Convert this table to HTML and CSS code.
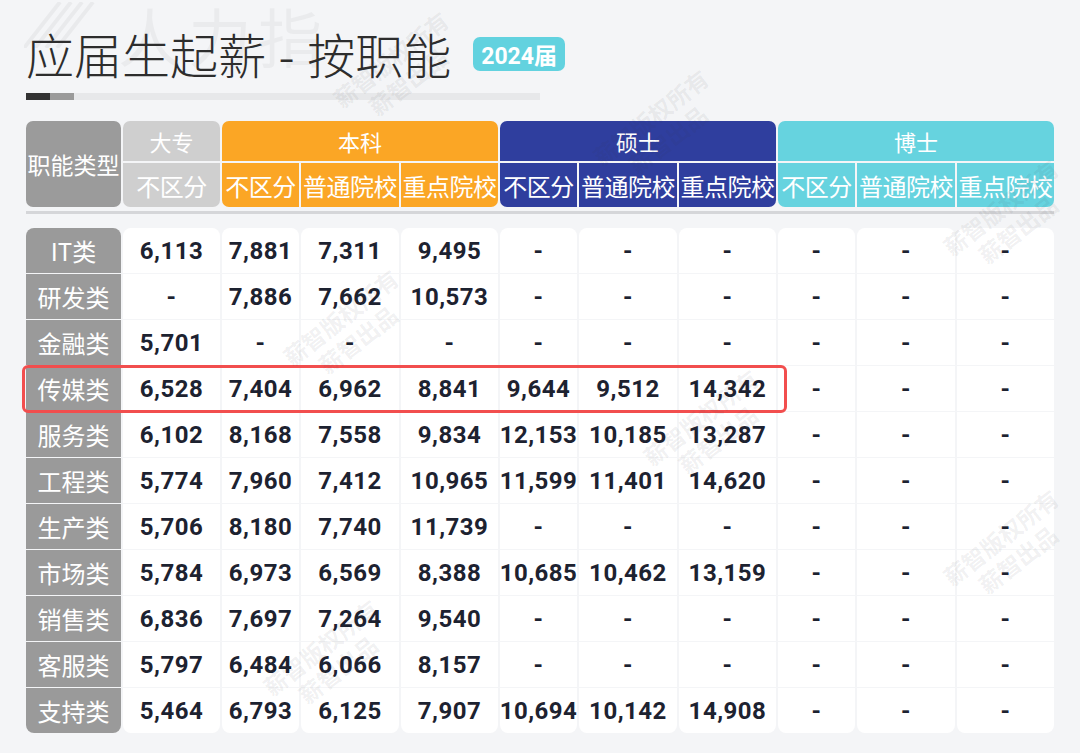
FILE: index.html
```html
<!DOCTYPE html>
<html lang="zh-CN">
<head>
<meta charset="utf-8">
<title>应届生起薪 - 按职能</title>
<link rel="stylesheet" href="styles.css">
</head>
<body>
<div class="page">
  <div class="bg-mark" aria-hidden="true">
    <svg class="bg-stripes" width="80" height="46" viewBox="0 0 80 46">
      <g stroke="#000" stroke-opacity="0.045" stroke-width="4">
        <line x1="0" y1="46" x2="36" y2="0"/>
        <line x1="11" y1="46" x2="47" y2="0"/>
        <line x1="22" y1="46" x2="58" y2="0"/>
        <line x1="33" y1="46" x2="69" y2="0"/>
      </g>
    </svg>
    <span class="bg-text">人力指</span>
  </div>

  <div class="title-row">
    <h1 class="title">应届生起薪 - 按职能</h1>
    <span class="badge">2024届</span>
  </div>
  <div class="bar"><span class="bar-dark"></span><span class="bar-mid"></span></div>

  <div class="table">
    <div class="thead">
      <div class="h-label">职能类型</div>
      <div class="h-title zk">大专</div>
      <div class="h-title bk span3">本科</div>
      <div class="h-title ss span3">硕士</div>
      <div class="h-title bs span3">博士</div>
      <div class="h-sub zk first last">不区分</div>
      <div class="h-sub bk first">不区分</div>
      <div class="h-sub bk">普通院校</div>
      <div class="h-sub bk last">重点院校</div>
      <div class="h-sub ss first">不区分</div>
      <div class="h-sub ss">普通院校</div>
      <div class="h-sub ss last">重点院校</div>
      <div class="h-sub bs first">不区分</div>
      <div class="h-sub bs">普通院校</div>
      <div class="h-sub bs last">重点院校</div>
    </div>
    <div class="rule"></div>
    <div class="tbody">
      <div class="c lbl top">IT类</div><div class="c top">6,113</div><div class="c top">7,881</div><div class="c top">7,311</div><div class="c top">9,495</div><div class="c top">-</div><div class="c top">-</div><div class="c top">-</div><div class="c top">-</div><div class="c top">-</div><div class="c top">-</div>
      <div class="c lbl">研发类</div><div class="c">-</div><div class="c">7,886</div><div class="c">7,662</div><div class="c">10,573</div><div class="c">-</div><div class="c">-</div><div class="c">-</div><div class="c">-</div><div class="c">-</div><div class="c">-</div>
      <div class="c lbl">金融类</div><div class="c">5,701</div><div class="c">-</div><div class="c">-</div><div class="c">-</div><div class="c">-</div><div class="c">-</div><div class="c">-</div><div class="c">-</div><div class="c">-</div><div class="c">-</div>
      <div class="c lbl">传媒类</div><div class="c">6,528</div><div class="c">7,404</div><div class="c">6,962</div><div class="c">8,841</div><div class="c">9,644</div><div class="c">9,512</div><div class="c">14,342</div><div class="c">-</div><div class="c">-</div><div class="c">-</div>
      <div class="c lbl">服务类</div><div class="c">6,102</div><div class="c">8,168</div><div class="c">7,558</div><div class="c">9,834</div><div class="c">12,153</div><div class="c">10,185</div><div class="c">13,287</div><div class="c">-</div><div class="c">-</div><div class="c">-</div>
      <div class="c lbl">工程类</div><div class="c">5,774</div><div class="c">7,960</div><div class="c">7,412</div><div class="c">10,965</div><div class="c">11,599</div><div class="c">11,401</div><div class="c">14,620</div><div class="c">-</div><div class="c">-</div><div class="c">-</div>
      <div class="c lbl">生产类</div><div class="c">5,706</div><div class="c">8,180</div><div class="c">7,740</div><div class="c">11,739</div><div class="c">-</div><div class="c">-</div><div class="c">-</div><div class="c">-</div><div class="c">-</div><div class="c">-</div>
      <div class="c lbl">市场类</div><div class="c">5,784</div><div class="c">6,973</div><div class="c">6,569</div><div class="c">8,388</div><div class="c">10,685</div><div class="c">10,462</div><div class="c">13,159</div><div class="c">-</div><div class="c">-</div><div class="c">-</div>
      <div class="c lbl">销售类</div><div class="c">6,836</div><div class="c">7,697</div><div class="c">7,264</div><div class="c">9,540</div><div class="c">-</div><div class="c">-</div><div class="c">-</div><div class="c">-</div><div class="c">-</div><div class="c">-</div>
      <div class="c lbl">客服类</div><div class="c">5,797</div><div class="c">6,484</div><div class="c">6,066</div><div class="c">8,157</div><div class="c">-</div><div class="c">-</div><div class="c">-</div><div class="c">-</div><div class="c">-</div><div class="c">-</div>
      <div class="c lbl bot">支持类</div><div class="c bot">5,464</div><div class="c bot">6,793</div><div class="c bot">6,125</div><div class="c bot">7,907</div><div class="c bot">10,694</div><div class="c bot">10,142</div><div class="c bot">14,908</div><div class="c bot">-</div><div class="c bot">-</div><div class="c bot">-</div>
      <div class="highlight" aria-hidden="true"></div>
    </div>
  </div>

  <div class="marks" aria-hidden="true">
    <span class="wm wm1">薪智版权所有<br>薪智出品</span>
    <span class="wm wm2">薪智版权所有<br>薪智出品</span>
    <span class="wm wm3">薪智版权所有<br>薪智出品</span>
    <span class="wm wm4">薪智版权所有<br>薪智出品</span>
    <span class="wm wm5">薪智版权所有<br>薪智出品</span>
    <span class="wm wm6">薪智版权所有<br>薪智出品</span>
    <span class="wm wm7">薪智版权所有<br>薪智出品</span>
  </div>
</div>
</body>
</html>
```

FILE: styles.css
```css
html, body {
  margin: 0;
  padding: 0;
  background: #f4f5f7;
}
body {
  font-family: "Noto Sans CJK SC", "Noto Sans", sans-serif;
  color: #2b2b2b;
  overflow: hidden;
}
.page {
  position: relative;
  width: 1080px;
  height: 753px;
  padding: 28px 0 0 26px;
  box-sizing: border-box;
}

/* faint background logo */
.bg-mark {
  position: absolute;
  left: 24px;
  top: 2px;
  display: flex;
  align-items: flex-start;
  gap: 14px;
  pointer-events: none;
}
.bg-text {
  font-size: 64px;
  line-height: 64px;
  color: rgba(0, 0, 0, 0.04);
  letter-spacing: 6px;
}

.title-row {
  position: relative;
  display: flex;
  align-items: center;
  gap: 22px;
  height: 50px;
}
.title {
  margin: 0;
  font-size: 48px;
  line-height: 50px;
  font-weight: 300;
  color: #2d2d2d;
  white-space: nowrap;
  word-spacing: 2px;
}
.badge {
  display: inline-flex;
  align-items: center;
  justify-content: center;
  height: 34px;
  padding: 0 8px;
  border-radius: 7px;
  background: #62d2df;
  color: #fff;
  font-family: "Roboto", "Noto Sans CJK SC", sans-serif;
  font-weight: 700;
  font-size: 23px;
  margin-top: 2px;
}

.bar {
  display: flex;
  width: 514px;
  height: 7px;
  margin-top: 15px;
  background: #e7e8ea;
}
.bar-dark { width: 24px; background: #333; }
.bar-mid { width: 24px; background: #9a9a9a; }

.table {
  margin-top: 21px;
  width: 1028px;
}
.thead, .tbody {
  display: grid;
  grid-template-columns: 95px 97px 77px 98px 97px 77px 98px 97px 77px 98px 97px;
  column-gap: 2px;
}
.thead {
  grid-template-rows: 40px 44px;
  row-gap: 2px;
  color: #fff;
}
.h-label {
  grid-row: span 2;
  background: #9b9b9b;
  border-radius: 7px;
  display: flex;
  align-items: center;
  justify-content: center;
  font-size: 23px;
  white-space: nowrap;
}
.h-title {
  display: flex;
  align-items: center;
  justify-content: center;
  font-size: 22px;
  border-radius: 7px 7px 0 0;
}
.span3 { grid-column: span 3; }
.h-sub {
  display: flex;
  align-items: center;
  justify-content: center;
  font-size: 24px;
  white-space: nowrap;
  letter-spacing: -0.5px;
}
.h-sub.first { border-bottom-left-radius: 7px; }
.h-sub.last { border-bottom-right-radius: 7px; }
.zk { background: #cfcfcf; }
.bk { background: #fba625; }
.ss { background: #2f3e9e; }
.bs { background: #66d3df; }

.rule {
  height: 3px;
  margin-top: 4px;
  background: #d5d6d9;
}

.tbody {
  position: relative;
  margin-top: 14px;
  grid-auto-rows: 45px;
  row-gap: 1px;
}
.c {
  background: #fff;
  display: flex;
  align-items: center;
  justify-content: center;
  font-family: "Roboto", "Noto Sans CJK SC", sans-serif;
  font-weight: 700;
  font-size: 24px;
  letter-spacing: 0.5px;
  color: #1d2230;
}
.c.lbl {
  background: #9a9a9a;
  color: #fff;
  font-family: "Noto Sans CJK SC", sans-serif;
  font-weight: 400;
  font-size: 24px;
  letter-spacing: 0;
}
.c.top { border-radius: 8px 8px 0 0; }
.c.bot { border-radius: 0 0 8px 8px; }

.highlight {
  position: absolute;
  left: -4px;
  top: 137px;
  width: 765px;
  height: 48px;
  box-sizing: border-box;
  border: 3px solid #f24e4e;
  border-radius: 6px;
  pointer-events: none;
}

/* watermarks */
.marks {
  position: absolute;
  inset: 0;
  pointer-events: none;
  overflow: hidden;
}
.wm {
  position: absolute;
  font-size: 23px;
  font-weight: 700;
  line-height: 28px;
  color: rgba(60, 60, 70, 0.08);
  transform: rotate(-38deg);
  text-align: center;
  white-space: nowrap;
}
.wm1 { left: 330px; top: 42px; }
.wm2 { left: 590px; top: 100px; }
.wm4 { left: 280px; top: 300px; }
.wm5 { left: 640px; top: 400px; }
.wm7 { left: 260px; top: 630px; }
.wm3 { left: 940px; top: 190px; }
.wm6 { left: 940px; top: 520px; }
```
